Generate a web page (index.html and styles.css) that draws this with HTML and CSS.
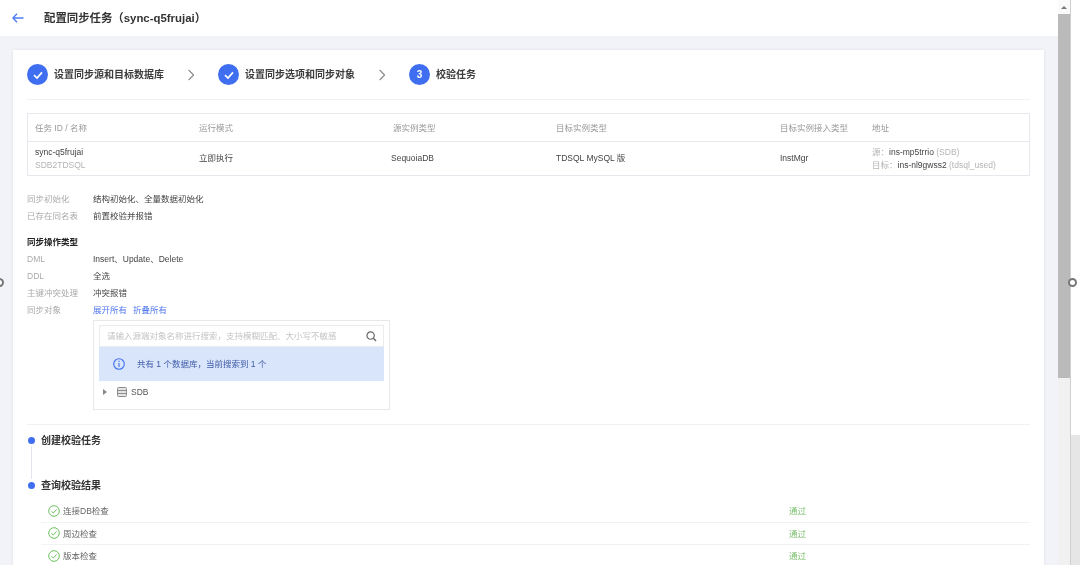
FILE: index.html
```html
<!DOCTYPE html>
<html lang="zh-CN">
<head>
<meta charset="utf-8">
<title>配置同步任务</title>
<link rel="stylesheet" href="styles.css">
</head>
<body>
<div class="window">
  <main class="page">
    <header class="topbar">
      <svg class="back" viewBox="0 0 12 10" width="12" height="10"><path d="M11.5 5H1M5 .8 .9 5 5 9.2" fill="none" stroke="#4f7df2" stroke-width="1.4"/></svg>
      <h1 class="title">配置同步任务（sync-q5frujai）</h1>
    </header>
    <section class="card">
      <div class="steps">
        <div class="step"><span class="circle"><svg viewBox="0 0 12 12" width="12" height="12"><path d="M2 6.2 5 9l5-5.6" fill="none" stroke="#fff" stroke-width="1.7"/></svg></span>设置同步源和目标数据库</div>
        <svg class="chev" viewBox="0 0 6 12" width="6" height="12"><path d="M.6 1l5 5-5 5" fill="none" stroke="#8a8a8a" stroke-width="1.1"/></svg>
        <div class="step"><span class="circle"><svg viewBox="0 0 12 12" width="12" height="12"><path d="M2 6.2 5 9l5-5.6" fill="none" stroke="#fff" stroke-width="1.7"/></svg></span>设置同步选项和同步对象</div>
        <svg class="chev" viewBox="0 0 6 12" width="6" height="12"><path d="M.6 1l5 5-5 5" fill="none" stroke="#8a8a8a" stroke-width="1.1"/></svg>
        <div class="step"><span class="circle">3</span>校验任务</div>
      </div>

      <div class="table">
        <div class="t-row t-head">
          <div>任务 ID / 名称</div><div>运行模式</div><div class="shift">源实例类型</div><div>目标实例类型</div><div>目标实例接入类型</div><div>地址</div>
        </div>
        <div class="t-row t-body">
          <div class="stack"><span>sync-q5frujai</span><span class="muted">SDB2TDSQL</span></div>
          <div>立即执行</div><div>SequoiaDB</div><div>TDSQL MySQL 版</div><div>InstMgr</div>
          <div class="stack"><span><span class="muted">源：</span>ins-mp5trrio <span class="muted">(SDB)</span></span><span><span class="muted">目标：</span>ins-nl9gwss2 <span class="muted">(tdsql_used)</span></span></div>
        </div>
      </div>

      <div class="info first">
        <div class="info-row"><span class="label">同步初始化</span><span>结构初始化、全量数据初始化</span></div>
        <div class="info-row"><span class="label">已存在同名表</span><span>前置校验并报错</span></div>
      </div>
      <div class="info second">
        <div class="info-row"><b class="info-title">同步操作类型</b></div>
        <div class="info-row"><span class="label">DML</span><span>Insert、Update、Delete</span></div>
        <div class="info-row"><span class="label">DDL</span><span>全选</span></div>
        <div class="info-row"><span class="label">主键冲突处理</span><span>冲突报错</span></div>
        <div class="info-row"><span class="label">同步对象</span><span class="links"><a>展开所有</a><a>折叠所有</a></span></div>
      </div>

      <div class="tree">
        <div class="search">
          <span>请输入源端对象名称进行搜索，支持模糊匹配、大小写不敏感</span>
          <svg viewBox="0 0 12 12" width="11" height="11"><circle cx="5" cy="5" r="4" fill="none" stroke="#666" stroke-width="1.3"/><path d="M8 8l3 3" stroke="#666" stroke-width="1.5"/></svg>
        </div>
        <div class="alert">
          <svg viewBox="0 0 12 12" width="12" height="12"><circle cx="6" cy="6" r="5.3" fill="none" stroke="#3f6ff0" stroke-width="1.1"/><path d="M6 5v4M6 2.8v1.2" stroke="#3f6ff0" stroke-width="1.1"/></svg>
          <span>共有 1 个数据库，当前搜索到 1 个</span>
        </div>
        <div class="node">
          <span class="caret"></span>
          <svg viewBox="0 0 10 10" width="10" height="10"><rect x=".5" y=".5" width="9" height="9" rx="1" fill="#e4e4e4" stroke="#8c8c8c"/><path d="M.5 3.5h9M.5 6.5h9" stroke="#8c8c8c"/></svg>
          <span>SDB</span>
        </div>
      </div>

      <div class="rule"></div>

      <div class="tl-item tl-create">
        <div class="marker"><span class="dot"></span><span class="stem"></span></div>
        <h2 class="tl-title">创建校验任务</h2>
      </div>
      <div class="tl-item">
        <div class="marker"><span class="dot"></span></div>
        <div class="tl-body">
          <h2 class="tl-title">查询校验结果</h2>
          <div class="results">
            <div class="result"><span class="r-name"><svg viewBox="0 0 12 12" width="12" height="12"><circle cx="6" cy="6" r="5.3" fill="none" stroke="#6cc05e" stroke-width="1"/><path d="M3.4 6.2 5.3 8l3.3-3.6" fill="none" stroke="#6cc05e" stroke-width="1"/></svg>连接DB检查</span><span class="pass">通过</span></div>
            <div class="result"><span class="r-name"><svg viewBox="0 0 12 12" width="12" height="12"><circle cx="6" cy="6" r="5.3" fill="none" stroke="#6cc05e" stroke-width="1"/><path d="M3.4 6.2 5.3 8l3.3-3.6" fill="none" stroke="#6cc05e" stroke-width="1"/></svg>周边检查</span><span class="pass">通过</span></div>
            <div class="result"><span class="r-name"><svg viewBox="0 0 12 12" width="12" height="12"><circle cx="6" cy="6" r="5.3" fill="none" stroke="#6cc05e" stroke-width="1"/><path d="M3.4 6.2 5.3 8l3.3-3.6" fill="none" stroke="#6cc05e" stroke-width="1"/></svg>版本检查</span><span class="pass">通过</span></div>
          </div>
        </div>
      </div>
    </section>
  </main>
  <div class="scrollbar">
    <div class="sb-up"><span></span></div>
    <div class="sb-thumb"></div>
  </div>
  <div class="gutter"><div class="gutter-top"></div></div>
  <span class="handle handle-l"></span>
  <span class="handle handle-r"></span>
</div>
</body>
</html>
```
FILE: styles.css
```css
* { box-sizing: border-box; }
html, body { margin: 0; height: 100%; overflow: hidden; background: #fff; }
body { font-family: "Liberation Sans", "Noto Sans CJK SC", sans-serif; font-size: 8.5px; line-height: 13px; color: #444; }
.window { position: relative; display: flex; width: 1080px; height: 565px; overflow: hidden; filter: blur(0.35px); }
.page { width: 1058px; height: 565px; background: #f2f3f8; overflow: hidden; flex: none; }
.topbar { display: flex; align-items: center; height: 36px; background: #fff; padding-left: 12px; }
.back { margin-right: 20px; }
.title { margin: 0; font-size: 11.4px; line-height: 16px; font-weight: 700; color: #333; }
.card { margin: 14px 14px 0 13px; background: #fff; padding: 0 14px; height: 520px; box-shadow: 0 0 3px rgba(0,0,0,.08); }
.steps { display: flex; align-items: center; gap: 24px; height: 50px; border-bottom: 1px solid #f1f2f4; }
.step { display: flex; align-items: center; gap: 6px; font-size: 10px; font-weight: 700; color: #3c3c3c; }
.circle { display: flex; align-items: center; justify-content: center; width: 21px; height: 21px; border-radius: 50%; background: #3f6ff0; color: #fff; font-size: 10px; }
.table { margin-top: 13px; border: 1px solid #e6e8ee; height: 63px; }
.t-row { display: grid; grid-template-columns: 164px 192px 165px 224px 92px 1fr; padding-left: 7px; align-items: center; }
.t-head { height: 28px; padding-top: 1px; color: #999; border-bottom: 1px solid #e6e8ee; }
.t-body { height: 33px; color: #444; }
.shift { padding-left: 2px; }
.stack { display: flex; flex-direction: column; }
.muted { color: #b4b4b4; }
.info-row { display: flex; align-items: center; height: 17px; color: #444; }
.first { margin-top: 15px; }
.second { margin-top: 9px; }
.label { width: 66px; color: #aaa; flex: none; }
.info-title { color: #222; }
.links { display: flex; gap: 6px; }
.links a { color: #4f76ee; }
.tree { margin: 1px 0 0 66px; width: 297px; height: 90px; border: 1px solid #e8e8e8; padding: 4px 5px; }
.search { display: flex; align-items: center; justify-content: space-between; height: 22px; border: 1px solid #ececec; padding: 0 6px 0 7px; color: #c4c4c4; }
.alert { display: flex; align-items: center; gap: 12px; height: 34px; background: #d9e5fb; padding-left: 14px; color: #3f5aa6; }
.node { display: flex; align-items: center; height: 22px; padding-left: 4px; color: #555; }
.caret { width: 0; height: 0; border-left: 4px solid #888; border-top: 3px solid transparent; border-bottom: 3px solid transparent; margin-right: 10px; }
.node svg { margin-right: 4px; }
.rule { margin-top: 14px; border-top: 1px solid #f1f2f4; }
.tl-item { display: flex; }
.tl-create { margin-top: 7px; height: 45px; }
.marker { display: flex; flex-direction: column; align-items: center; width: 8px; margin-right: 6px; flex: none; }
.dot { width: 7px; height: 7px; margin-top: 5px; border-radius: 50%; background: #3f6ff0; flex: none; }
.stem { width: 1px; flex: 1; margin-top: 2px; margin-bottom: -2px; background: #e2e5ef; }
.tl-title { margin: 0; height: 18px; line-height: 18px; font-size: 10px; font-weight: 700; color: #333; }
.tl-body { flex: 1; }
.results { margin-top: 5px; }
.result { display: flex; align-items: center; height: 22.5px; padding-top: 2px; border-bottom: 1px solid #f1f2f4; padding-left: 7px; color: #666; }
.r-name { display: flex; align-items: center; gap: 3px; width: 741px; }
.r-name svg { margin-top: -2px; }
.pass { color: #7cc06e; }
.scrollbar { display: flex; flex-direction: column; width: 13px; height: 565px; background: #f1f1f1; border-right: 1px solid #cfcfcf; flex: none; }
.sb-up { display: flex; justify-content: center; align-items: center; height: 14px; background: #fafafa; }
.sb-up span { width: 0; height: 0; border-bottom: 3px solid #777; border-left: 3px solid transparent; border-right: 3px solid transparent; }
.sb-thumb { height: 364px; background: #bababa; }
.gutter { flex: 1; background: #e6e6e6; }
.gutter-top { height: 435px; background: #fff; }
.handle { position: absolute; top: 278px; width: 9px; height: 9px; border: 2px solid #777; border-radius: 50%; background: #fff; }
.handle-l { left: -5px; }
.handle-r { left: 1068px; }
```
